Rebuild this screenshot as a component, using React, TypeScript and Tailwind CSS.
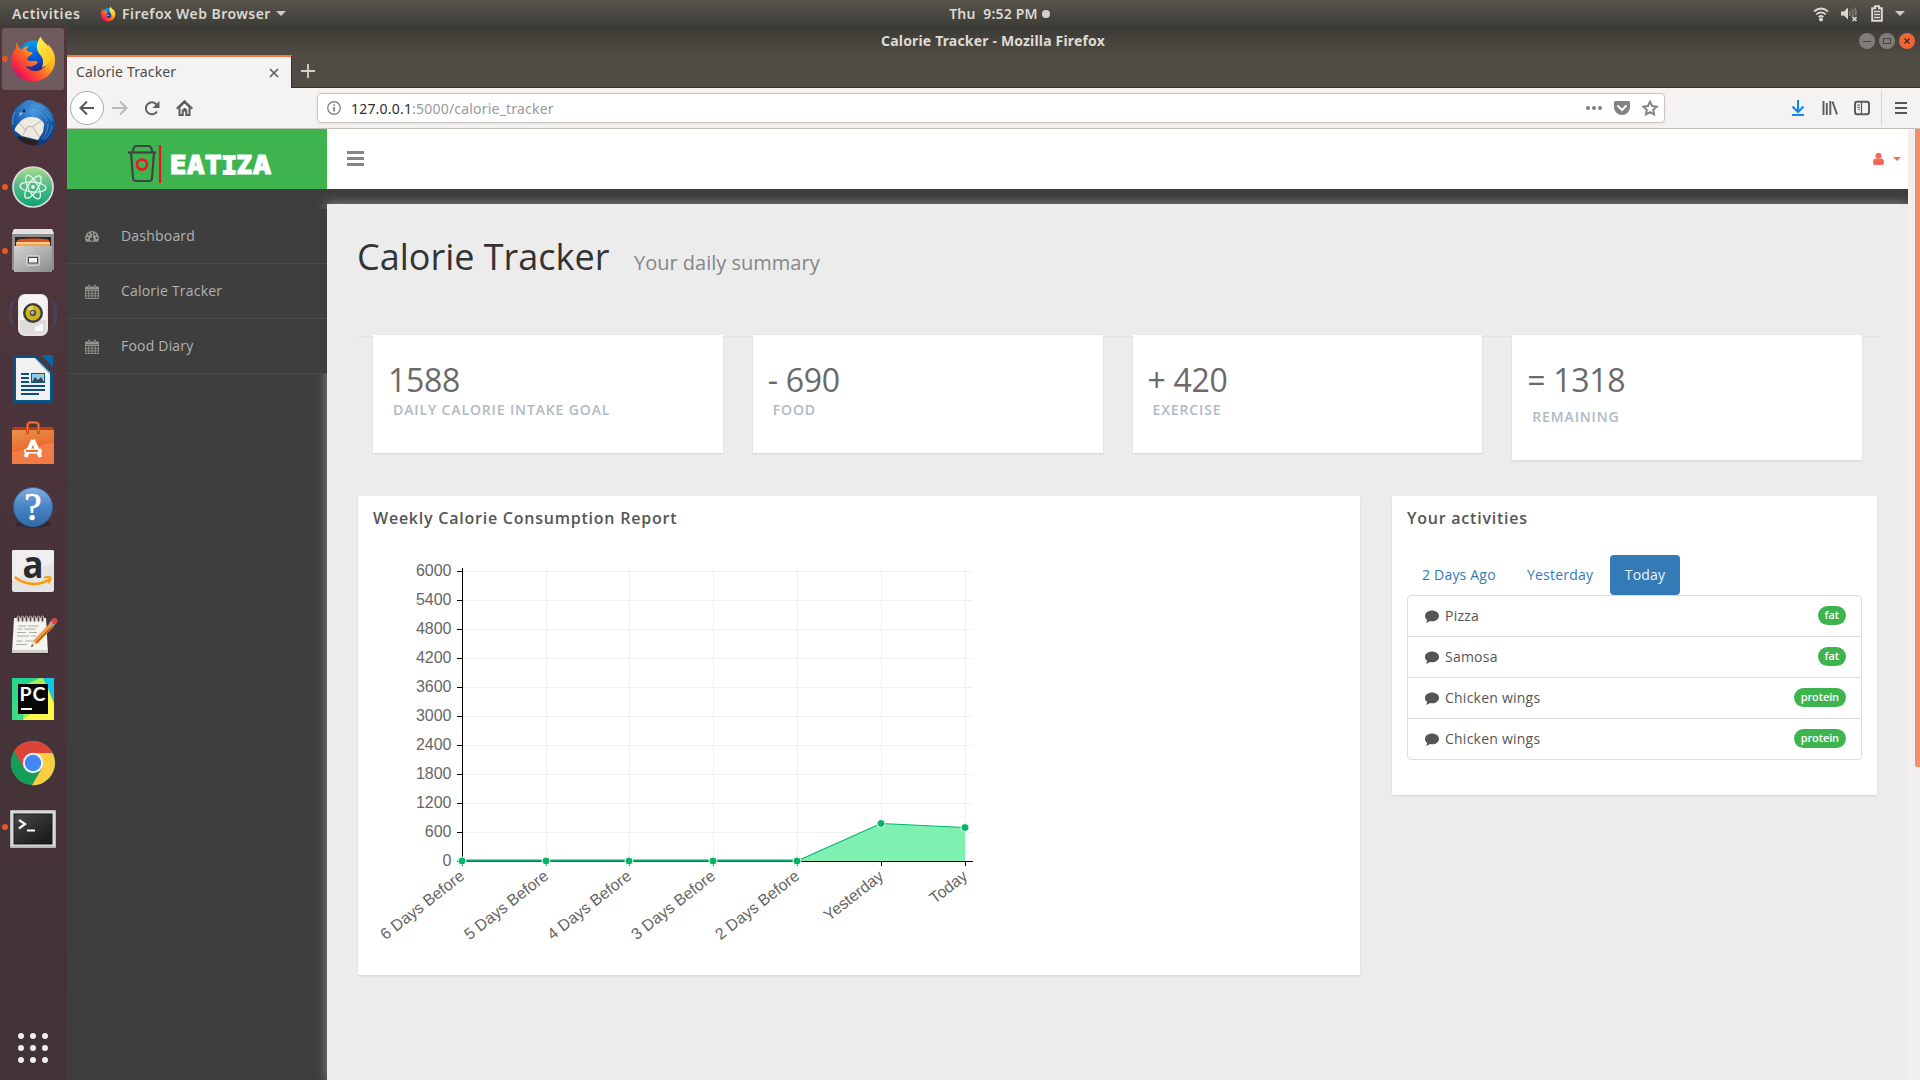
import React from "react";

const Svg = ({ w, h = w, className = "", children, vb }: { w: number; h?: number; className?: string; children: React.ReactNode; vb?: string }) => (
  <svg width={w} height={h} viewBox={vb ?? `0 0 ${w} ${h}`} className={`block shrink-0 overflow-visible ${className}`} fill="none">
    {children}
  </svg>
);

const FirefoxArt = () => (
  <>
    <defs>
      <linearGradient id="ffBody" x1="1" y1="0.1" x2="0.1" y2="0.9">
        <stop offset="0" stopColor="#ffe226" />
        <stop offset="0.35" stopColor="#ffb01c" />
        <stop offset="0.6" stopColor="#ff5d25" />
        <stop offset="0.85" stopColor="#f5204c" />
        <stop offset="1" stopColor="#c60a84" />
      </linearGradient>
      <linearGradient id="ffGlobe" x1="0.3" y1="0" x2="0.5" y2="1">
        <stop offset="0" stopColor="#00a5f5" />
        <stop offset="0.5" stopColor="#0062dc" />
        <stop offset="1" stopColor="#2b1f86" />
      </linearGradient>
      <linearGradient id="ffFlame" x1="0.2" y1="0" x2="0.8" y2="1">
        <stop offset="0" stopColor="#fff04a" />
        <stop offset="1" stopColor="#ffbd1f" />
      </linearGradient>
    </defs>
    <circle cx="25" cy="21" r="15.5" fill="url(#ffGlobe)" />
    <path d="M8 7c-1 2-1 4-.7 6C4 17 2 21 2.200 27c.8 11 10 19.500 21.600 19.500C36.500 46.500 46 37 46 25c0-7-3-12-7.500-16 2 4 2 10-.5 14.500 1 7-5 13-12 12.500-5-.3-8-2.500-9-5 5 2 8-.5 11-2.500 1.500-1.300 0-2.500-2.500-2.500-3 0-6 1-7.500-2 0-2 2-2.600 5-5 .6-.8 1-1.700-.5-2-2-.2-4-.4-5-1.800.3-2 1-3 2.300-4.200-3.300.3-5 1.300-6.800 3.400C11 14 9 13 8 7z" fill="url(#ffBody)" />
    <path d="M31.500 1.500c-3 5-5 10-2.500 15 2 4 6 6 5 12-.3 2-1 3.500-1.500 4.500 6-3 11-8 11-15C43.500 12 35 10 31.500 1.500z" fill="url(#ffFlame)" />
  </>
);

const dock: { dot?: boolean; active?: boolean; art: React.ReactNode }[] = [
  { dot: true, active: true, art: <FirefoxArt /> },
  {
    art: (
      <>
        <defs>
          <radialGradient id="tbB" cx="0.5" cy="0.2" r="0.9">
            <stop offset="0" stopColor="#4a9be0" />
            <stop offset="0.5" stopColor="#1d62b0" />
            <stop offset="1" stopColor="#0a2d6a" />
          </radialGradient>
        </defs>
        <path d="M15 3c4-3 9-2 12 0 12 2 19 12 19 23 0 10-6 17-14 20-6 1-12 1-17-2C7 40 2 32 2 23c0-8 4-14 9-17 1-1 2-2 4-3z" fill="url(#tbB)" />
        <path d="M5 26l6-8 12-1 13 2-2 14-5 8-16-4-8-6z" fill="#edeae2" />
        <path d="M9 22l7 9 4-4 3 1 12-8M19 27l-5 9M24 28l6 10" stroke="#bcb7aa" strokeWidth="1" />
        <path d="M8 37l22 5-2 4c-8 1-16-2-20-9z" fill="#2a211f" />
        <path d="M13 8c7-6 18-5 24 2 5 5 8 11 8 17-2 9-7 15-14 18 5-6 7-12 5-18-2-6-7-9-13-9-5 0-9 1-13 6-3 3-5 6-5 10-2-8 0-19 8-26z" fill="url(#tbB)" />
        <path d="M22 6c8 0 15 6 18 13M24 10c6 1 12 6 14 12M28 5c8 3 13 9 15 17M39 25c0 6-2 11-6 15M43 27c-1 6-4 10-8 14M6 13c-2 4-3 8-2 13" stroke="#60a6e3" strokeWidth="1" opacity="0.7" />
        <path d="M14 14l-4 4 1-5z" fill="#8fb7e0" />
        <circle cx="15" cy="12" r="1.400" fill="#112a5a" />
      </>
    ),
  },
  {
    dot: true,
    art: (
      <>
        <defs>
          <linearGradient id="atom" x1="0" y1="0" x2="0" y2="1">
            <stop offset="0" stopColor="#a9dc8c" />
            <stop offset="0.45" stopColor="#56bb88" />
            <stop offset="1" stopColor="#0aa374" />
          </linearGradient>
        </defs>
        <circle cx="24" cy="24" r="20" fill="url(#atom)" stroke="#dedcdc" strokeWidth="1.700" />
        <g stroke="#e3f7ea" strokeWidth="1.300">
          <ellipse cx="24" cy="24" rx="13" ry="5" transform="rotate(5 24 24)" />
          <ellipse cx="24" cy="24" rx="13" ry="5" transform="rotate(63 24 24)" />
          <ellipse cx="24" cy="24" rx="13" ry="5" transform="rotate(123 24 24)" />
        </g>
        <circle cx="24" cy="24" r="1.800" fill="#fff" />
      </>
    ),
  },
  {
    dot: true,
    art: (
      <>
        <defs>
          <linearGradient id="cab" x1="0" y1="0" x2="1" y2="1">
            <stop offset="0" stopColor="#d3d3d3" />
            <stop offset="1" stopColor="#8c8c8c" />
          </linearGradient>
        </defs>
        <path d="M5 2h38l2 4v37H3V6z" fill="#8f8f8f" />
        <path d="M5 2h38l2 5H3z" fill="#e3e1e2" />
        <path d="M6 10h36v10H6z" fill="#2c2623" />
        <path d="M8 13c4-2 28-2 32 0v7H8z" fill="#d8531e" />
        <path d="M7 15h34v5H7z" fill="#f3a54b" />
        <path d="M7 16h34" stroke="#fff1d8" strokeWidth="1" />
        <path d="M5 19h38v26H5z" fill="url(#cab)" />
        <rect x="17.500" y="28.500" width="13" height="10" rx="1.500" fill="#b4b4b4" stroke="#d2d2d2" />
        <rect x="19.500" y="30.500" width="9" height="5.500" fill="#f4f4f0" stroke="#484848" />
      </>
    ),
  },
  {
    art: (
      <>
        <path d="M6 8c-5 8-5 21 0 29M3 11c-3 7-3 16 0 23M42 8c5 8 5 21 0 29M45 11c3 7 3 16 0 23" stroke="#4c4263" strokeWidth="1.300" />
        <rect x="9" y="3" width="30" height="42" rx="7" fill="#e6e5e3" />
        <rect x="10.500" y="4" width="27" height="38" rx="6" fill="#f4f3f1" />
        <path d="M11 29h26v7c0 5-2 7-6 7H17c-4 0-6-2-6-7z" fill="#dedcda" />
        <circle cx="24" cy="22" r="10" fill="#3c3e42" />
        <circle cx="24" cy="22" r="7.500" fill="#cbb413" />
        <path d="M24 22l-6-4a7.500 7.500 0 0 1 6-3.500z" fill="#e9d650" />
        <circle cx="24" cy="22" r="3.300" fill="#53575d" />
        <circle cx="23.500" cy="21.500" r="1.500" fill="#b9c0c8" />
        <path d="M26 36c4 0 4-3 8-3v7h-8z" fill="#fbfbfa" />
      </>
    ),
  },
  {
    art: (
      <>
        <path d="M6 0h20l18 18v27a3 3 0 0 1-3 3H6.500A2.500 2.500 0 0 1 4 45.500V2.500A2.500 2.500 0 0 1 6 0z" fill="#085382" />
        <path d="M7 3h19l15 15v27H7z" fill="#f2f1f1" />
        <path d="M26 3l15 15v2L25 3z" fill="#bdbdbd" />
        <path d="M32 0h10a2 2 0 0 1 2 2v10z" fill="#0768a8" />
        <path d="M12 19h8M12 23h8M12 27h8M12 31h24M12 35h24M12 39h18" stroke="#0b4f80" strokeWidth="2" />
        <rect x="22.500" y="18.500" width="13" height="9" fill="#8ecbf2" stroke="#0b5a93" />
        <path d="M23 27l3-5 3 3 3-3 3 5z" fill="#3f4345" />
        <path d="M31 19h4v3z" fill="#eac83f" />
      </>
    ),
  },
  {
    art: (
      <>
        <defs>
          <linearGradient id="bag" x1="0" y1="0" x2="0.3" y2="1">
            <stop offset="0" stopColor="#e59450" />
            <stop offset="0.6" stopColor="#ee6c2b" />
            <stop offset="0.62" stopColor="#f17f49" />
            <stop offset="1" stopColor="#f17b42" />
          </linearGradient>
        </defs>
        <path d="M4 8h40l1 4H3z" fill="#c03b10" />
        <path d="M3 11h42v34H3z" fill="url(#bag)" />
        <path d="M18.500 15V6.500q0-3 3-3h5q3 0 3 3V15" stroke="#d4481a" strokeWidth="3" />
        <path d="M18.500 14V6.500q0-3 3-3h5q3 0 3 3V14" stroke="#f07d4c" strokeWidth="1" />
        <path d="M24 21l-7.500 17M24 21l7.500 17" stroke="#fff" strokeWidth="4" />
        <rect x="15" y="29.500" width="18" height="5" rx="2.500" fill="#fff" />
        <path d="M17 32h12" stroke="#ee6c2b" strokeWidth="2" />
      </>
    ),
  },
  {
    art: (
      <>
        <defs>
          <linearGradient id="help" x1="0" y1="0" x2="0" y2="1">
            <stop offset="0" stopColor="#85aee2" />
            <stop offset="0.5" stopColor="#4783c3" />
            <stop offset="1" stopColor="#2f6ba6" />
          </linearGradient>
        </defs>
        <ellipse cx="24" cy="41" rx="18" ry="4" fill="#362831" />
        <circle cx="24" cy="24" r="19.500" fill="url(#help)" stroke="#2f659c" />
        <text x="24" y="37" textAnchor="middle" fontFamily="Liberation Serif, serif" fontSize="39" fill="#fff" stroke="#fff" strokeWidth="0.700">?</text>
      </>
    ),
  },
  {
    art: (
      <>
        <rect x="3" y="3" width="42" height="42" rx="2" fill="#e4e4e4" />
        <path d="M3 5a2 2 0 0 1 2-2h38a2 2 0 0 1 2 2v10L3 33z" fill="#efefef" />
        <text x="13.500" y="31" fontFamily="Open Sans, sans-serif" fontWeight="700" fontSize="38" fill="#2b2b2b" textLength="21" lengthAdjust="spacingAndGlyphs">a</text>
        <path d="M6.500 30.500c10 8 24 8.500 33.500 2" stroke="#ff9900" strokeWidth="2.400" strokeLinecap="round" />
        <path d="M35 31c3-1.600 6-1 6.500-.5s-.2 3.500-2 6" stroke="#ff9900" strokeWidth="1.800" />
      </>
    ),
  },
  {
    art: (
      <>
        <path d="M5 9h32l3 34H3z" fill="#1f171a" opacity="0.5" />
        <path d="M5 7h32l2 34H3z" fill="#f5f4f0" />
        <path d="M3 39h36v3H3z" fill="#cfcec8" />
        <path d="M9 15h8m2 0h10M8.500 18h5m2 0h11M8 21.500h9m3 0h8M8 25h12m2 0h5M7.500 30h6m3 0h8M7 33.500h11" stroke="#adada8" strokeWidth="1" />
        {[9, 13, 17, 21, 25, 29, 33].map((x) => (
          <ellipse key={x} cx={x + 0.5} cy="8" rx="1.400" ry="3" stroke="#c9c9c9" strokeWidth="1" fill="#4a4043" />
        ))}
        <path d="M24 30l17-18 4 3.500L28 33z" fill="#ee9b3b" />
        <path d="M27 32l17-17" stroke="#b8561c" strokeWidth="1.500" />
        <path d="M24 30l4 3-6 2.500z" fill="#f1d9b4" />
        <path d="M22 36l1-2.500 1.500 1.500z" fill="#222" />
        <path d="M40 12l3-3 4 3.500-3 3z" fill="#9fa5a8" />
        <circle cx="45.500" cy="10" r="3" fill="#e0414a" />
      </>
    ),
  },
  {
    art: (
      <>
        <defs>
          <linearGradient id="pc" x1="0" y1="0" x2="0" y2="1">
            <stop offset="0" stopColor="#24d48e" />
            <stop offset="1" stopColor="#41dc85" />
          </linearGradient>
        </defs>
        <rect x="3" y="3" width="42" height="42" fill="url(#pc)" />
        <path d="M29 3h16v28z" fill="#10c7e8" />
        <path d="M18 9l13-6h3l11 24v18H14z" fill="#a9ec55" />
        <path d="M39 14l6 16v15H14l10-8z" fill="#fcf84a" />
        <rect x="9" y="9" width="30" height="30" fill="#060606" />
        <text x="10.500" y="26" fontFamily="Lato, sans-serif" fontWeight="bold" fontSize="19.500" fill="#fff" textLength="26">PC</text>
        <path d="M12 34h11" stroke="#fff" strokeWidth="2" />
      </>
    ),
  },
  {
    art: (
      <>
        <circle cx="24" cy="24" r="22.300" fill="#159e57" />
        <path d="M24 24L5 12A22.300 22.300 0 0 1 43.500 14H24z" fill="#dc4437" />
        <path d="M24 14h19.500A22.300 22.300 0 0 1 23 46.300L33 29z" fill="#ffcd42" />
        <path d="M5 12l9.500 16 4-10z" fill="#dc4437" />
        <circle cx="24" cy="24" r="10.200" fill="#f3f3f3" />
        <circle cx="24" cy="24" r="8.200" fill="#4387f5" />
      </>
    ),
  },
  {
    dot: true,
    art: (
      <g transform="translate(0 2)">
        <defs>
          <linearGradient id="term" x1="0" y1="0" x2="1" y2="1">
            <stop offset="0" stopColor="#484848" />
            <stop offset="0.5" stopColor="#2e2e2e" />
            <stop offset="1" stopColor="#151515" />
          </linearGradient>
        </defs>
        <rect x="1" y="5" width="46" height="38" rx="1" fill="#b9b9b9" />
        <rect x="2" y="6" width="44" height="35" fill="#dadada" />
        <rect x="5" y="9" width="38" height="30" fill="url(#term)" stroke="#1a1a1a" />
        <path d="M10 15l6 4-6 4.500" stroke="#f2f2f2" strokeWidth="2.300" />
        <path d="M18 25.500h8" stroke="#fff" strokeWidth="2" />
      </g>
    ),
  },
];

const Dock = () => (
  <aside className="flex w-[67px] shrink-0 flex-col bg-linear-to-b from-[#51363b] via-[#49333b] to-[#423336]">
    <div className="flex flex-col">
      {dock.map((d, i) => (
        <div key={i} className="relative flex h-16 items-center">
          {d.active && <div className="absolute top-[1px] left-[2px] h-[62px] w-[62px] rounded-[3px] bg-[#6f5a5e]" />}
          {d.dot && <div className="absolute left-[2px] size-[6px] rounded-full bg-[#e95420]" />}
          <Svg w={48} className="relative ml-[9px]">{d.art}</Svg>
        </div>
      ))}
    </div>
    <div className="mt-[174px] ml-[18px] grid w-[30px] grid-cols-3 gap-[6px]">
      {Array.from({ length: 9 }, (_, i) => (
        <span key={i} className="size-[6px] rounded-full bg-[#f0efee]" />
      ))}
    </div>
  </aside>
);

const TopBar = () => (
  <header className="flex h-[27px] shrink-0 items-center bg-linear-to-b from-[#58554c] to-[#3d3c37] pr-[15px] pl-[12px] text-[14px] font-semibold text-[#dcd9d2] [font-family:'Noto_Sans',sans-serif]">
    <div className="flex flex-1 items-center">
      <span className="w-[88px] tracking-[0.6px]">Activities</span>
      <Svg w={16} vb="0 0 48 48"><FirefoxArt /></Svg>
      <span className="ml-[6px] w-[154px] tracking-[0.45px] whitespace-nowrap">Firefox Web Browser</span>
      <Svg w={10} h={5}><path d="M0 0h10L5 5z" fill="#cfccc5" /></Svg>
    </div>
    <div className="ml-[82px] flex items-center">
      <span className="tracking-[0.2px] whitespace-pre">Thu  9:52 PM</span>
      <span className="ml-[4px] size-[8px] rounded-full bg-[#d4d1ca]" />
    </div>
    <div className="flex flex-1 items-center justify-end">
      <Svg w={16}>
        <path d="M1 5.500q7-6 14 0M3.300 8.300q4.700-4 9.400 0M5.600 11q2.400-2 4.800 0" stroke="#dcd9d2" strokeWidth="1.700" />
        <circle cx="8" cy="13.500" r="2" fill="#dcd9d2" />
      </Svg>
      <Svg w={18} className="ml-[11px]">
        <path d="M1 6.500h3l4-4v12l-4-4H1z" fill="#dcd9d2" />
        <path d="M9.500 6q1.500 2.500 0 5M12 4q2.500 4.500 0 8M14.500 2.500q2.500 4 1 8" stroke="#85827b" strokeWidth="1.400" />
        <path d="M12.500 12l4 4m0-4l-4 4" stroke="#dcd9d2" strokeWidth="1.700" />
      </Svg>
      <Svg w={12} h={17} className="ml-[13px]">
        <path d="M1.200 3.200H4V1.200h4v2h2.800v12.600H1.200z" stroke="#dcd9d2" strokeWidth="2" />
        <path d="M3 6.500h6M3 9.500h6M3 12.500h6" stroke="#dcd9d2" strokeWidth="1.500" />
      </Svg>
      <Svg w={10} h={5} className="ml-[12px]"><path d="M0 0h10L5 5z" fill="#cfccc5" /></Svg>
    </div>
  </header>
);

const TitleBar = () => (
  <div className="flex h-[28px] shrink-0 items-center bg-linear-to-b from-[#3b3a35] to-[#4f4c44] pr-[5px]">
    <div className="w-[55px]" />
    <div className="flex-1 pb-[2px] text-center text-[14px] font-bold text-[#dfdbd2] [font-family:'Noto_Sans',sans-serif]">
      <span className="inline-block pl-[5px] tracking-[0.17px]">Calorie Tracker - Mozilla Firefox</span>
    </div>
    <div className="flex gap-[4px]">
      <Svg w={16}><circle cx="8" cy="8" r="8" fill="#7f7d77" /><path d="M4 8.500h8" stroke="#45433e" /></Svg>
      <Svg w={16}><circle cx="8" cy="8" r="8" fill="#7f7d77" /><rect x="4.500" y="5.500" width="7" height="5" stroke="#45433e" /></Svg>
      <Svg w={16}><circle cx="8" cy="8" r="8" fill="#ee6538" /><path d="M5.500 5.500l5 5m0-5l-5 5" stroke="#4a2516" strokeWidth="1.300" /></Svg>
    </div>
  </div>
);

const TabStrip = () => (
  <div className="flex h-[33px] shrink-0 bg-[#504c44]">
    <div className="flex w-[225px] items-center justify-between border-t-2 border-r border-t-[#f07746] border-r-[#33312d] bg-[#f4f3f2] pr-[12px] pl-[9px]">
      <span className="pb-[2px] text-[14px] tracking-[0.15px] text-[#4c4c4c] [font-family:'Noto_Sans',sans-serif]">Calorie Tracker</span>
      <Svg w={10}><path d="M1 1l8 8m0-8l-8 8" stroke="#5c5c5c" strokeWidth="1.600" /></Svg>
    </div>
    <div className="flex flex-1 border-b border-[#33312d] pt-[9px] pl-[9px]">
      <Svg w={14}><path d="M7 0v14M0 7h14" stroke="#d3d1cc" strokeWidth="1.800" /></Svg>
    </div>
  </div>
);

const Toolbar = () => (
  <div className="flex h-[41px] shrink-0 items-center border-b border-[#c3c0bc] bg-[#f4f3f2] pr-[13px] pl-[3px]">
    <div className="flex size-[34px] items-center justify-center rounded-full border border-[#adaba8] bg-white">
      <Svg w={16}><path d="M15 8H1.500M8 1.500L1.500 8 8 14.500" stroke="#575757" strokeWidth="2" /></Svg>
    </div>
    <Svg w={16} className="ml-[8px]"><path d="M0 8h14.500M8 1.500L14.500 8 8 14.500" stroke="#bab9b8" strokeWidth="2" /></Svg>
    <Svg w={16} className="ml-[16px]">
      <path d="M13 11.500A6 6 0 1 1 12.500 4.500" stroke="#5f5f5f" strokeWidth="2" />
      <path d="M15.500 1v7h-7z" fill="#5f5f5f" />
    </Svg>
    <Svg w={17} h={16} className="ml-[16px]">
      <path d="M.7 8.700L8.500 1l7.800 7.700" stroke="#5f5f5f" strokeWidth="1.900" />
      <path d="M3.500 7v8h3.200v-4.500h3.600V15h3.200V7l-5-5z" fill="none" stroke="#5f5f5f" strokeWidth="2" />
      <rect x="7.500" y="8" width="2.500" height="2" fill="#5f5f5f" />
    </Svg>
    <div className="ml-[124px] flex h-[30px] w-[1348px] items-center rounded-[4px] border border-[#c8c5c2] bg-white pr-[6px] pl-[9px] shadow-[0_1px_3px_rgba(0,0,0,0.07)]">
      <Svg w={14}>
        <circle cx="7" cy="7" r="6.300" stroke="#7b7b7b" strokeWidth="1.200" />
        <path d="M7 6v4.500M7 3.200v1.600" stroke="#7b7b7b" strokeWidth="1.600" />
      </Svg>
      <span className="ml-[10px] flex-1 text-[14px] tracking-[0.2px] text-[#9a9a9a] [font-family:'Noto_Sans',sans-serif]">
        <span className="text-[#2d2d2d]">127.0.0.1</span>:5000/calorie_tracker
      </span>
      <Svg w={16}><circle cx="2" cy="8" r="2" fill="#7f7f7f" /><circle cx="8" cy="8" r="2" fill="#7f7f7f" /><circle cx="14" cy="8" r="2" fill="#7f7f7f" /></Svg>
      <Svg w={16} className="ml-[12px]">
        <path d="M1.500 1h13Q16 1 16 2.500V7a8 8 0 0 1-16 0V2.500Q0 1 1.500 1z" fill="#828282" />
        <path d="M4 6l4 4 4-4" stroke="#fff" strokeWidth="2" strokeLinecap="round" />
      </Svg>
      <Svg w={16} className="ml-[12px]"><path d="M8 1.700l2 4.300 4.700.6-3.500 3.200.9 4.700L8 12.200l-4.100 2.300.9-4.700L1.300 6.600 6 6z" stroke="#828282" strokeWidth="1.900" /></Svg>
    </div>
    <div className="flex-1" />
    <Svg w={14} h={16} className="mr-[17px]"><path d="M7 0v11M1.500 6.500L7 12l5.500-5.500M1 15h12" stroke="#1186fb" strokeWidth="2" /></Svg>
    <Svg w={16} className="mr-[16px]"><path d="M1.500 1v14M4.800 3v12M8.300 1v14M10.500 1.500l4.500 13" stroke="#5c5c5c" strokeWidth="1.900" /></Svg>
    <Svg w={16} className="mr-[11px]">
      <rect x="1" y="1.700" width="14" height="12.600" rx="2" stroke="#5c5c5c" strokeWidth="2" />
      <path d="M7.500 2v12" stroke="#5c5c5c" strokeWidth="1.200" />
      <path d="M3 5h3M3 7.200h3M4 9.400h2" stroke="#5c5c5c" />
    </Svg>
    <div className="mr-[13px] h-[34px] w-px bg-[#d6d4d1]" />
    <Svg w={12} h={14}><path d="M0 2h12M0 7h12M0 12h12" stroke="#575757" strokeWidth="2" /></Svg>
  </div>
);

const CalendarIcon = () => (
  <Svg w={14} h={15}>
    <path d="M.5 3h13v11.500H.5zM.5 6.500h13M3.750 6.500v8M7 6.500v8M10.250 6.500v8M.5 9.200h13M.5 11.900h13" stroke="#96948f" strokeWidth="0.900" />
    <path d="M.5 3h13v2.500H.5z" fill="#96948f" />
    <path d="M4 .8v3.400M10 .8v3.400" stroke="#96948f" strokeWidth="2.200" />
    <path d="M4 1.500v2M10 1.500v2" stroke="#3e3e3e" strokeWidth="0.800" />
  </Svg>
);

const GaugeIcon = () => (
  <Svg w={14} h={15}>
    <path d="M0 9a7 7 0 0 1 14 0c0 1.500-.4 2.700-1 3.700H1C.4 11.700 0 10.500 0 9z" fill="#96948f" />
    <g fill="#3e3e3e">
      <circle cx="2.300" cy="9" r="1" /><circle cx="3.800" cy="5.600" r="1" /><circle cx="7" cy="4.100" r="1" /><circle cx="10.200" cy="5.600" r="1" /><circle cx="11.700" cy="9" r="1" />
    </g>
    <circle cx="6.800" cy="10.300" r="1.700" fill="#3e3e3e" />
    <path d="M7 10l1-4.500" stroke="#3e3e3e" strokeWidth="1" />
  </Svg>
);

const Logo = () => (
  <Svg w={260} h={60}>
    <g stroke="#3f4443" strokeWidth="2.200" strokeLinejoin="round">
      <path d="M65.500 23l1.500-4.500q.5-1.500 2-1.500h13q1.500 0 2 1.500l1.500 4.500" />
      <path d="M61 23.500h28" />
      <path d="M64 24l2 25q.2 3 2.500 3h14q2.300 0 2.500-3l2-25" />
    </g>
    <circle cx="75" cy="35.500" r="5" stroke="#fb0d2c" strokeWidth="2.700" />
    <path d="M93 16v38" stroke="#f40e2c" strokeWidth="2.200" />
    <g fontFamily="Inter, sans-serif" fontWeight="900" fontSize="25.500" fill="#fff" stroke="#fff" strokeWidth="0.900">
      <text y="45">
        <tspan x="103.500" textLength="15.500" lengthAdjust="spacingAndGlyphs">E</tspan>
        <tspan x="119.500" textLength="18.500" lengthAdjust="spacingAndGlyphs">A</tspan>
        <tspan x="138" textLength="16.500" lengthAdjust="spacingAndGlyphs">T</tspan>
        <tspan x="154.500" fontFamily="DejaVu Sans Mono, monospace" fontWeight="bold" strokeWidth="1.800">I</tspan>
        <tspan x="169.500" textLength="16" lengthAdjust="spacingAndGlyphs">Z</tspan>
        <tspan x="185.500" textLength="19" lengthAdjust="spacingAndGlyphs">A</tspan>
      </text>
    </g>
  </Svg>
);

const Sidebar = () => (
  <nav className="flex w-[260px] shrink-0 flex-col">
    <div className="h-[60px] bg-[#3eb44f]"><Logo /></div>
    <div className="relative z-10 mt-[20px] bg-[#3e3e3e]">
      {["Dashboard", "Calorie Tracker", "Food Diary"].map((t, i) => (
        <a key={t} className="flex h-[55px] items-center border-b border-[#4a4a4a] pl-[18px] text-[14px] tracking-[0.2px] text-[#b3b1ae]">
          {i === 0 ? <GaugeIcon /> : <CalendarIcon />}
          <span className="ml-[22px] pb-[2px]">{t}</span>
        </a>
      ))}
    </div>
  </nav>
);

const stats = [
  { n: "1588", l: "DAILY CALORIE INTAKE GOAL" },
  { n: "- 690", l: "FOOD" },
  { n: "+ 420", l: "EXERCISE" },
  { n: "= 1318", l: "REMAINING", tall: true },
];

const xs = [462, 546, 629, 713, 797, 881, 965];
const days = ["6 Days Before", "5 Days Before", "4 Days Before", "3 Days Before", "2 Days Before", "Yesterday", "Today"];
const ys = [861, 861, 861, 861, 861, 823.5, 827.5];

const Chart = () => (
  <Svg w={660} h={420} vb="358 545 660 420">
    <g stroke="#f0f0f0">
      {xs.slice(1).map((x) => <path key={x} d={`M${x + 0.5} 568V861`} />)}
      {Array.from({ length: 10 }, (_, i) => <path key={i} d={`M463 ${571.5 + i * 29}H973`} />)}
    </g>
    <path d="M797 861L881 823.500 965 827.500V861z" fill="#7df0b2" />
    <path d="M462.500 568V861.500H973" stroke="#000" />
    <g stroke="#000">
      {Array.from({ length: 11 }, (_, i) => <path key={i} d={`M457 ${571.5 + i * 29}H462`} />)}
      {xs.map((x) => <path key={x} d={`M${x + 0.5} 861v5`} />)}
    </g>
    <path d={"M" + xs.map((x, i) => `${x} ${ys[i]}`).join("L")} stroke="#06b36c" strokeWidth="1.200" />
    <path d="M462.500 860.500H797" stroke="#06a968" strokeWidth="2" />
    {xs.map((x, i) => <circle key={x} cx={x} cy={ys[i]} r="4" fill="#06b36c" stroke="#eafff4" strokeWidth="1" />)}
    <g fill="#666" fontFamily="Liberation Sans, Arial, sans-serif" fontSize="16" textAnchor="end">
      {Array.from({ length: 11 }, (_, i) => <text key={i} x="451.500" y={576 + i * 29}>{6000 - i * 600}</text>)}
      {xs.map((x, i) => (
        <text key={x} transform={`translate(${x + 3.5} 878) rotate(-38)`}>{days[i]}</text>
      ))}
    </g>
  </Svg>
);

const items = [["Pizza", "fat"], ["Samosa", "fat"], ["Chicken wings", "protein"], ["Chicken wings", "protein"]];

const Activities = () => (
  <section className="h-[299px] w-[485px] bg-white px-[15px] shadow-[0_1px_2px_rgba(0,0,0,0.1)]">
    <h3 className="pt-[10px] text-[16px] leading-[24px] font-semibold tracking-[0.77px] text-[#555]">Your activities</h3>
    <div className="mt-[25px] flex text-[14px] leading-[40px] tracking-[0.2px] text-[#337ab7]">
      <span className="w-[105px] pl-[15px]">2 Days Ago</span>
      <span className="w-[98px] pl-[15px]">Yesterday</span>
      <span className="w-[70px] rounded-[4px] bg-[#337ab7] text-center text-[#eef3f9]">Today</span>
    </div>
    <ul className="divide-y divide-[#dddddd] rounded-[4px] border border-[#dddddd]">
      {items.map(([n, t], i) => (
        <li key={i} className="flex h-[41px] items-center pr-[15px] pb-[1px] pl-[17px] last:h-[40px]">
          <Svg w={14} h={13} className="mt-[1px]"><path d="M7 .5c3.900 0 7 2.400 7 5.400s-3.100 5.400-7 5.400c-.7 0-1.300-.1-1.900-.2C4 12 2.700 12.600.8 12.800c.8-.8 1.300-1.700 1.400-2.700C.8 9.100 0 7.600 0 5.900 0 2.900 3.100.5 7 .5z" fill="#555" /></Svg>
          <span className="ml-[6px] flex-1 text-[14px] leading-[20px] tracking-[0.23px] text-[#555]">{n}</span>
          <span className="h-[19px] rounded-full bg-[#3eb44f] px-[7px] text-[11px] leading-[18px] font-semibold tracking-[-0.1px] text-white">{t}</span>
        </li>
      ))}
    </ul>
  </section>
);

const Page = () => (
  <div className="flex flex-1 overflow-hidden bg-[#3e3e3e] [font-family:'Open_Sans',sans-serif]">
    <Sidebar />
    <div className="flex w-[1581px] flex-col">
      <div className="relative z-10 flex h-[60px] shrink-0 items-center bg-white pr-[7px] pl-[20px]">
        <Svg w={17} h={15} className="mb-[2px]"><path d="M0 1.500h17M0 7.500h17M0 13.500h17" stroke="#868686" strokeWidth="3" /></Svg>
        <div className="flex-1" />
        <Svg w={11} h={12}>
          <circle cx="5.500" cy="3" r="3" fill="#f3685c" />
          <path d="M0 9.500q0-4 3-4 2.500 1.600 5 0 3 0 3 4 0 2.500-2 2.500H2Q0 12 0 9.500z" fill="#f3685c" />
        </Svg>
        <Svg w={8} h={4} className="ml-[9px]"><path d="M0 0h8L4 4z" fill="#f3685c" /></Svg>
      </div>
      <main className="mt-[15px] flex-1 bg-[#ececec] px-[30px] shadow-[0_0_10px_rgba(190,190,190,0.6)]">
        <div className="flex items-baseline pt-[26px]">
          <h1 className="w-[277px] text-[36px] leading-[54px] whitespace-nowrap text-[#333]">Calorie Tracker</h1>
          <span className="text-[20px] text-[#868686]">Your daily summary</span>
        </div>
        <div className="mt-[52px] h-px bg-[#e2e2e2]" />
        <div className="mt-[-2px] ml-px flex h-[161px] w-[1519px] items-start">
          {stats.map((s) => (
            <div key={s.l} className="flex-1 px-[15px]">
              <div className={`bg-white pl-[15px] shadow-[0_1px_2px_rgba(0,0,0,0.1)] ${s.tall ? "h-[125px]" : "h-[118px]"}`}>
                <div className="pt-[24px] text-[32px] leading-[42px] tracking-[-0.3px] text-[#6a6a6a]">{s.n}</div>
                <div className={`pl-[5px] text-[14px] leading-[20px] font-semibold tracking-[0.87px] text-[#b0bac2] ${s.tall ? "pt-[6px]" : "mt-[-1px]"}`}>{s.l}</div>
              </div>
            </div>
          ))}
        </div>
        <div className="ml-px flex items-start gap-[32px]">
          <section className="h-[479px] w-[1002px] bg-white shadow-[0_1px_2px_rgba(0,0,0,0.1)]">
            <h3 className="h-[49px] pt-[10px] pl-[15px] text-[16px] leading-[24px] font-semibold tracking-[0.77px] text-[#555]">Weekly Calorie Consumption Report</h3>
            <Chart />
          </section>
          <Activities />
        </div>
      </main>
    </div>
    <div className="relative z-10 w-[12px] bg-[#f1f0ee] pl-[7px]">
      <div className="h-[638px] w-[5px] rounded-bl-[2px] bg-[#f1906a]" />
    </div>
  </div>
);

export default function App() {
  return (
    <div className="flex h-[1080px] w-[1920px] flex-col overflow-hidden">
      <TopBar />
      <div className="flex min-h-0 flex-1">
        <Dock />
        <div className="flex flex-1 flex-col">
          <TitleBar />
          <TabStrip />
          <Toolbar />
          <Page />
        </div>
      </div>
    </div>
  );
}
